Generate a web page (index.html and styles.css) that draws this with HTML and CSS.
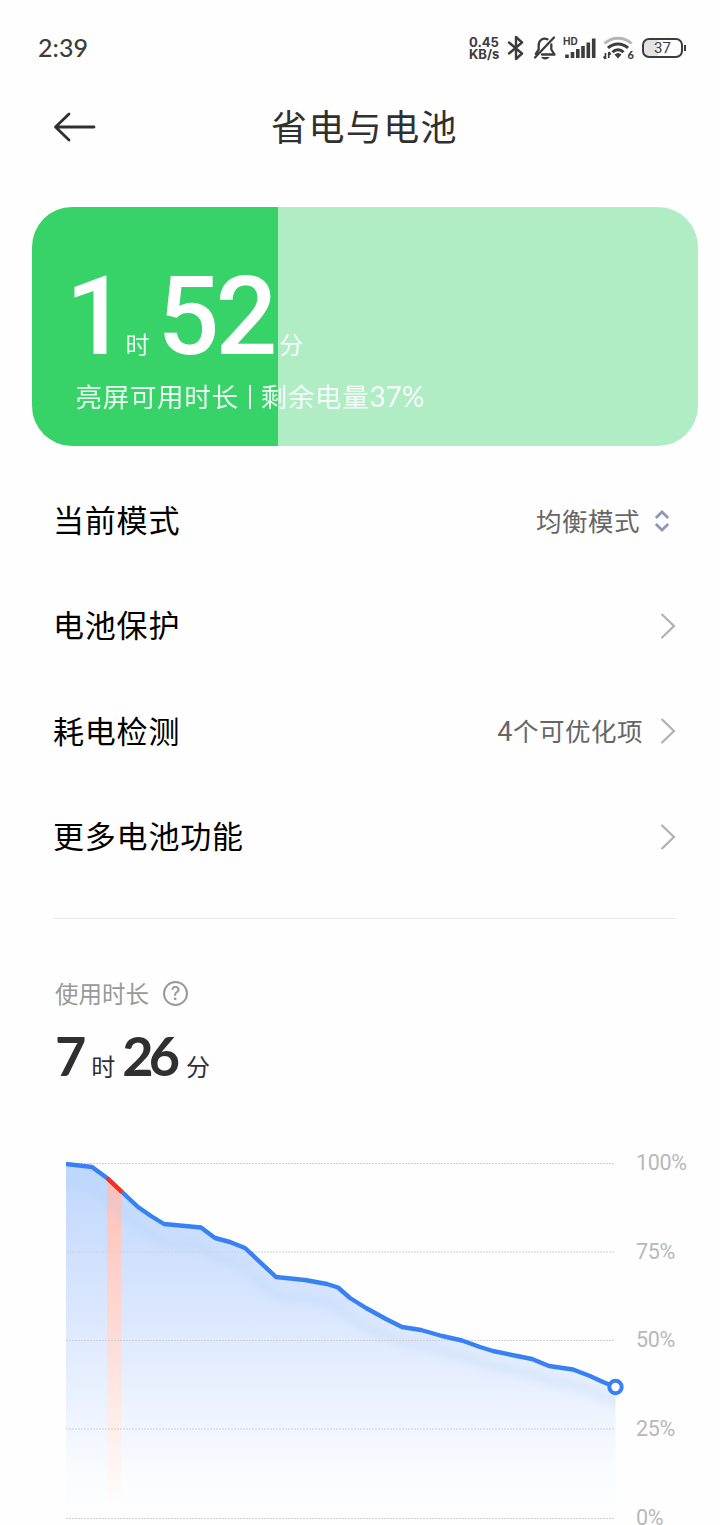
FILE: index.html
```html
<!DOCTYPE html>
<html lang="zh-CN">

<head>
    <meta charset="UTF-8">
    <meta name="viewport" content="width=device-width, initial-scale=1.0">
    <title>省电与电池</title>
    <link rel="stylesheet" href="styles.css">
</head>

<body>
    <div class="status-bar">
        <span class="clock">2:39</span>
        <div class="status-icons">
            <div class="speed"><span>0.45</span><span>KB/s</span></div>
            <svg class="bluetooth" width="18" height="26" viewBox="0 0 18 26">
                <path d="M2 7.5 15 18.5 9 24V2l6 5.5L2 18.5" fill="none" stroke="#3c3c3c" stroke-width="2.4" stroke-linejoin="round" stroke-linecap="round"/>
            </svg>
            <svg class="mute" width="24" height="26" viewBox="0 0 24 26">
                <g fill="none" stroke="#3c3c3c" stroke-width="2.3" stroke-linecap="round" stroke-linejoin="round">
                    <path d="M2 22.500 21 2.500M14.500 4.300C10 2.200 5.700 5.300 5.700 10v4.500L2.800 18.800M18.300 9.500v5L21.500 19.500H9"/>
                </g>
                <path d="M8 22h8.500c-1.500 3.200-7 3.200-8.500 0z" fill="#3c3c3c"/>
            </svg>
            <div class="signal">
                <span class="hd">HD</span>
                <svg width="33" height="22" viewBox="0 0 33 22">
                    <path d="M4 21v-3.500M9.500 21v-6M14.800 21v-9M20 21V9M25.300 21V5.500M30.700 21V1.500" stroke="#3c3c3c" stroke-width="3.600" stroke-linecap="butt"/>
                </svg>
            </div>
            <div class="wifi">
                <svg width="30" height="24" viewBox="0 0 30 24">
                    <g fill="none" stroke-width="3">
                        <path d="M1.500 7.500C9 .5 21 .5 28.500 7.500" stroke="#b5b5b5"/>
                        <path d="M5 12C10.500 6.500 19.500 6.500 25 12M9.500 16.200C12.500 13 17.500 13 20.500 16.200" stroke="#3c3c3c"/>
                        <path d="M2.500 17v6M5.800 16v6M.5 20.500 2.500 23M7.800 18.500 5.800 16" stroke="#3c3c3c" stroke-width="1.700"/>
                    </g>
                    <path d="M11.500 18.500Q15 15.500 18.500 18.500L15 22.500z" fill="#3c3c3c"/>
                </svg>
                <span class="wifi-gen">6</span>
            </div>
            <div class="battery"><span class="battery-body">37</span><span class="battery-tip"></span></div>
        </div>
    </div>

    <div class="header">
        <svg class="back" width="44" height="32" viewBox="0 0 44 32">
            <path d="M16 3 2.500 16 16 29M2.500 16H41" fill="none" stroke="#303030" stroke-width="2.800" stroke-linecap="round" stroke-linejoin="round"/>
        </svg>
        <h1>省电与电池</h1>
    </div>

    <div class="card">
        <div class="card-time">
            <span class="big one">1</span><span class="unit">时</span><span class="big">52</span><span class="unit last">分</span>
        </div>
        <div class="card-text"><span>亮屏可用时长</span><span class="bar"></span><span>剩余电量<b>37%</b></span></div>
    </div>

    <ul class="menu">
        <li>
            <span class="label">当前模式</span>
            <span class="value">均衡模式</span>
            <svg class="updown" width="16" height="22" viewBox="0 0 16 22">
                <path d="M1.800 8 8 2l6.200 6M1.800 14 8 20l6.200-6" fill="none" stroke="#8f97b8" stroke-width="2.700"/>
            </svg>
        </li>
        <li>
            <span class="label">电池保护</span>
            <svg class="arrow" width="16" height="26" viewBox="0 0 16 26">
                <path d="M1.500 1 14 13 1.500 25" fill="none" stroke="#b0b0b0" stroke-width="2.200"/>
            </svg>
        </li>
        <li>
            <span class="label">耗电检测</span>
            <span class="value"><b>4</b>个可优化项</span>
            <svg class="arrow" width="16" height="26" viewBox="0 0 16 26">
                <path d="M1.500 1 14 13 1.500 25" fill="none" stroke="#b0b0b0" stroke-width="2.200"/>
            </svg>
        </li>
        <li>
            <span class="label">更多电池功能</span>
            <svg class="arrow" width="16" height="26" viewBox="0 0 16 26">
                <path d="M1.500 1 14 13 1.500 25" fill="none" stroke="#b0b0b0" stroke-width="2.200"/>
            </svg>
        </li>
    </ul>

    <div class="usage">
        <div class="usage-title">
            <span>使用时长</span>
            <span class="help">?</span>
        </div>
        <div class="usage-time">
            <span class="num">7</span><span class="unit">时</span><span class="num">26</span><span class="unit">分</span>
        </div>
    </div>

    <div class="chart">
        <svg width="560" height="374" viewBox="0 0 560 374">
            <defs>
                <linearGradient id="fill" gradientUnits="userSpaceOnUse" x1="0" y1="14" x2="0" y2="368">
                    <stop offset="0" stop-color="#bfd7fd"/>
                    <stop offset=".35" stop-color="#d6e4fe"/>
                    <stop offset=".65" stop-color="#eaf1fe"/>
                    <stop offset=".88" stop-color="#fafcff"/>
                    <stop offset="1" stop-color="#fefefe"/>
                </linearGradient>
                <linearGradient id="heavy" gradientUnits="userSpaceOnUse" x1="0" y1="28" x2="0" y2="350">
                    <stop offset="0" stop-color="#ffbfb5"/>
                    <stop offset=".5" stop-color="#fddcd7"/>
                    <stop offset="1" stop-color="#fffcfb"/>
                </linearGradient>
                <filter id="soft" x="-10%" y="-20%" width="120%" height="150%">
                    <feGaussianBlur stdDeviation="5"/>
                </filter>
                <clipPath id="area">
                    <path d="M0 14 26 17 41 28 56 42 72 57 85 66 98 74 135 77.500 149 88 164 92 179 98 210 127 239 130 261 134 272 137.500 284 148 300 158 320 169 336 177 355 180 376 186 396 190.500 414 197 427 201 446 205 466 209 483 216 507 219.500 524 226 537 232 549.500 237V368H0z"/>
                </clipPath>
            </defs>
            <g clip-path="url(#area)">
                <rect width="550" height="368" fill="url(#fill)"/>
                <rect x="41" y="28" width="14.500" height="322" fill="url(#heavy)"/>
                <path d="M-20 31 0 33 26 36 41 47 56 61 72 76 85 85 98 93 135 96.500 149 107 164 111 179 117 210 146 239 149 261 153 272 156.500 284 167 300 177 320 186 336 192 355 195 376 201 396 205.500 414 212 427 216 446 220 466 224 483 231 507 234.500 524 241 537 247 570 257" fill="none" stroke="#a5cdee" stroke-opacity=".26" stroke-width="9" filter="url(#soft)"/>
            </g>
            <path d="M0 13.500H549M0 102H549M0 190.500H549M0 279H549M0 368.500H549" stroke="#cfcfd3" stroke-width="1" stroke-dasharray="2 1"/>
            <path d="M0 14 26 17 41 28 56 42 72 57 85 66 98 74 135 77.500 149 88 164 92 179 98 210 127 239 130 261 134 272 137.500 284 148 300 158 320 169 336 177 355 180 376 186 396 190.500 414 197 427 201 446 205 466 209 483 216 507 219.500 524 226 537 232 549.500 237" fill="none" stroke="#3881f5" stroke-width="4.400" stroke-linejoin="round"/>
            <path d="M41 28 56 42" stroke="#f5301f" stroke-width="4.400"/>
            <circle cx="549.500" cy="237" r="6.200" fill="#fff" stroke="#3881f5" stroke-width="4"/>
        </svg>
        <div class="axis">
            <span>100%</span>
            <span>75%</span>
            <span>50%</span>
            <span>25%</span>
            <span>0%</span>
        </div>
    </div>
</body>

</html>
```
FILE: styles.css
```css
* {
    box-sizing: border-box;
}

body {
    margin: 0;
    width: 720px;
    height: 1525px;
    overflow: hidden;
    background-color: #fefefe;
    color: #303030;
    font-family: Lato, "Noto Sans CJK SC", sans-serif;
}

svg {
    display: block;
    flex-shrink: 0;
}

/* status bar */
.status-bar {
    display: flex;
    justify-content: space-between;
    align-items: center;
    height: 95px;
    padding: 0 34px 0 38px;
    color: #3c3c3c;
}

.clock {
    padding-bottom: 2px;
    font-size: 25px;
    font-weight: 500;
    letter-spacing: 0.1px;
    line-height: 30px;
}

.status-icons {
    display: flex;
    align-items: center;
}

.speed {
    display: flex;
    flex-direction: column;
    width: 34px;
    margin: 1px 4px 0 0;
    font-family: Inter, sans-serif;
    font-size: 13px;
    font-weight: 700;
    letter-spacing: 0;
    line-height: 12px;
    white-space: nowrap;
}

.bluetooth {
    margin-right: 8px;
}

.mute {
    margin-right: 6px;
}

.signal {
    position: relative;
    margin-right: 7px;
}

.hd {
    position: absolute;
    left: 0;
    top: -1px;
    font-family: Inter, sans-serif;
    font-size: 10px;
    font-weight: 700;
    line-height: 10px;
}

.wifi {
    position: relative;
    margin-right: 9px;
}

.wifi-gen {
    position: absolute;
    right: -1px;
    bottom: 0;
    font-size: 11px;
    font-weight: 900;
    line-height: 11px;
}

.battery {
    display: flex;
    align-items: center;
}

.battery-body {
    width: 41px;
    height: 20px;
    border: 2px solid #3c3c3c;
    border-radius: 7px;
    background: linear-gradient(to right, #e2e2e2 37%, #fefefe 37%);
    font-family: Roboto, sans-serif;
    font-size: 15px;
    line-height: 17px;
    text-align: center;
}

.battery-tip {
    width: 2px;
    height: 6px;
    margin-left: 1px;
    background-color: #3c3c3c;
}

/* title */
.header {
    display: flex;
    align-items: center;
    height: 64px;
    padding-left: 53px;
}

h1 {
    margin: 0 0 0 174px;
    font-size: 36px;
    font-weight: 400;
    letter-spacing: 1.4px;
    line-height: 50px;
}

/* battery card */
.card {
    width: 666px;
    height: 239px;
    margin: 48px 0 0 31.500px;
    padding: 54px 0 0 44px;
    border-radius: 40px;
    background: linear-gradient(to right, #37d369 37%, #b0edc5 37%);
    color: #fff;
}

.card-time {
    display: flex;
    align-items: baseline;
    height: 114px;
    line-height: 112px;
}

.big {
    font-family: Roboto, sans-serif;
    font-size: 109px;
    font-weight: 500;
    letter-spacing: -4px;
}

.one {
    margin-left: -10px;
}

.card .unit {
    margin: 0 8px 0 2px;
    font-size: 24px;
    opacity: 0.9;
}

.card .unit.last {
    margin-left: 6px;
}

.card-text {
    display: flex;
    align-items: center;
    margin-top: 2px;
    font-size: 26.500px;
    letter-spacing: 0.7px;
    line-height: 38px;
    opacity: 0.9;
}

.card-text b {
    font-size: 28px;
    font-weight: 400;
    letter-spacing: 0;
}

.bar {
    width: 2px;
    height: 24px;
    margin: 0 10px;
    background-color: #fff;
}

/* settings rows */
.menu {
    margin: 22px 44px 0 53px;
    padding: 0 0 29px;
    border-bottom: 1px solid #e8e8e8;
    list-style: none;
}

.menu li {
    display: flex;
    align-items: center;
    height: 105.300px;
}

.label {
    flex: 1;
    padding-bottom: 4px;
    color: #000;
    font-size: 31px;
    letter-spacing: 0.8px;
}

.value {
    padding-bottom: 3px;
    color: #666;
    font-size: 25.500px;
    letter-spacing: 0.5px;
}

.value b {
    font-family: Roboto, sans-serif;
    font-size: 27px;
    font-weight: 400;
}

.updown {
    margin: 0 6px 0 14px;
}

.arrow {
    margin-left: 17px;
}

/* usage */
.usage {
    padding: 56px 0 0 55px;
}

.usage-title {
    display: flex;
    align-items: center;
    height: 36px;
    color: #999;
    font-size: 23.500px;
}

.help {
    width: 25px;
    height: 25px;
    margin-left: 14px;
    border: 2px solid #999;
    border-radius: 50%;
    font-family: Inter, sans-serif;
    font-size: 18px;
    font-weight: 500;
    line-height: 21px;
    text-align: center;
}

.usage-time {
    display: flex;
    align-items: baseline;
    height: 68px;
    padding-top: 11px;
    line-height: 68px;
}

.num {
    font-size: 54px;
    font-weight: 700;
    letter-spacing: -5px;
}

.usage-time .unit {
    margin: 0 7px 0 10px;
    font-size: 24px;
}

.usage-time .unit:last-child {
    margin-left: 11px;
}

/* chart */
.chart {
    display: flex;
    margin: 71px 0 0 66px;
}

.axis {
    display: flex;
    flex-direction: column;
    margin: 5px 0 0 10px;
    color: #b8b8b8;
    font-family: Roboto, sans-serif;
    font-size: 21.500px;
    letter-spacing: -0.3px;
}

.axis span {
    height: 88.600px;
    line-height: 16px;
}

.axis span:last-child {
    height: 16px;
}
```
